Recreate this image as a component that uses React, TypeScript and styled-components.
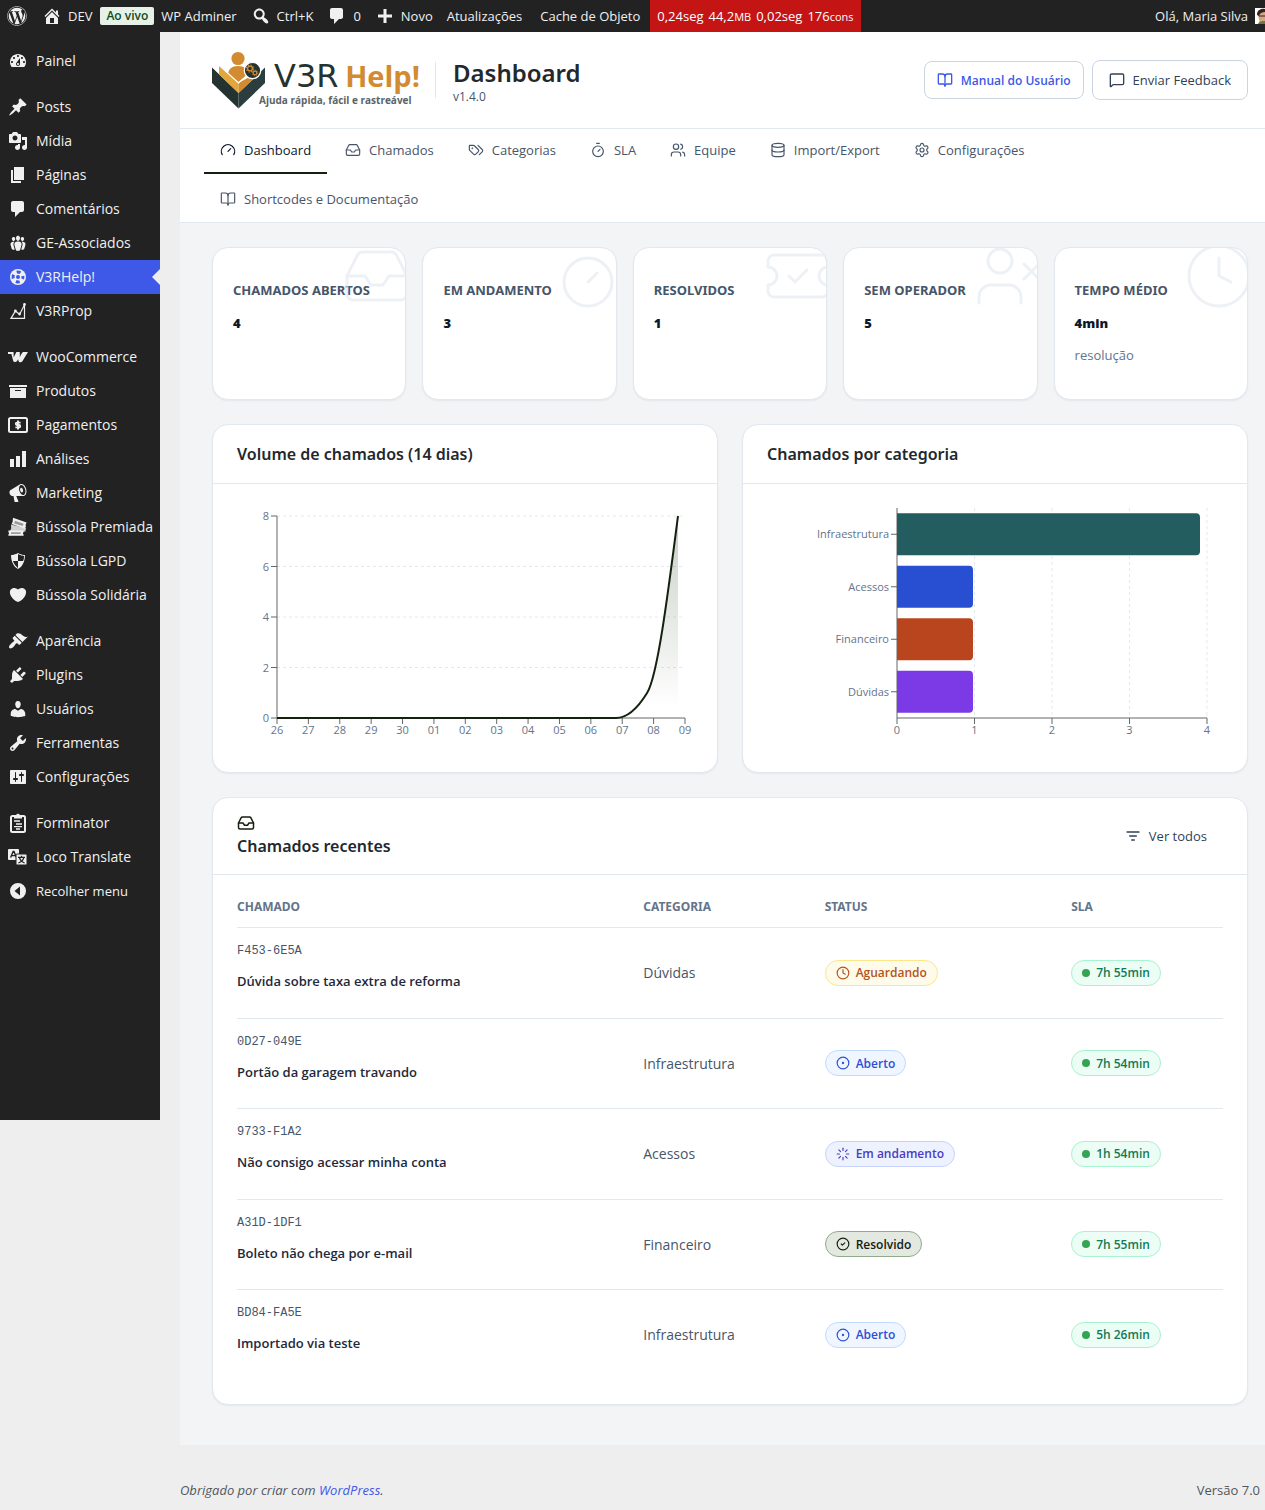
import { ReactNode } from "react";
import {
    BookOpen, CircleCheck, CircleDot, Clock, createLucideIcon, Database, Gauge, Inbox, Loader,
    LucideIcon, MessageSquare, Settings, TicketCheck, Timer, UserX, Users
} from "lucide-react";
import { FaWordpress } from "react-icons/fa";
import styled, { createGlobalStyle } from "styled-components";

const font = {
    body: `"Open Sans", "Noto Sans", sans-serif`,
    heading: `"Noto Sans", "Open Sans", sans-serif`,
    mono: `"Liberation Mono", monospace`,
};

const color = {
    bar: "#222222",
    barText: "#f0f0f1",
    accent: "#3e58e8",
    page: "#eeeeee",
    panel: "#f3f4f6",
    border: "#e2e8f0",
    title: "#23282d",
    text: "#475569",
    muted: "#64748b",
    primary: "#14210f",
};

const GlobalStyle = createGlobalStyle`
    * {
        box-sizing: border-box;
    }

    body {
        margin: 0;
        background-color: ${color.page};
        font-family: ${font.body};
        font-size: 13px;
        color: ${color.text};
    }

    a {
        color: inherit;
        text-decoration: none;
    }

    button {
        font-family: inherit;
        cursor: pointer;
    }

    h1, h2, h3, p, ul {
        margin: 0;
        padding: 0;
    }
`;

/* admin bar */

const AdminBar = styled.header`
    display: flex;
    align-items: center;
    height: 32px;
    padding-left: 7px;
    background-color: ${color.bar};
    color: ${color.barText};
    white-space: nowrap;
    overflow: hidden;
`;

const BarLink = styled.a<{ $space?: number }>`
    display: flex;
    align-items: center;
    gap: 6px;
    margin-left: ${(p) => p.$space ?? 14}px;
    line-height: 32px;

    svg {
        flex-shrink: 0;
    }
`;

const LiveBadge = styled.span`
    margin: 0 0 0 8px;
    padding: 0 6px;
    border-radius: 2px;
    background-color: #e6f2e8;
    color: #0f4a1c;
    font-size: 12px;
    font-weight: 600;
    line-height: 18px;
`;

const Monitor = styled.a`
    display: flex;
    gap: 5px;
    margin-left: 10px;
    padding: 0 7px;
    background-color: #c41414;
    color: #ffffff;
    line-height: 32px;

    small {
        font-size: 11px;
    }
`;

const BarUser = styled.a`
    display: flex;
    align-items: center;
    gap: 7px;
    margin-left: auto;
`;

/* side menu */

const Shell = styled.div`
    display: flex;
    align-items: flex-start;
`;

const SideMenu = styled.nav`
    flex: 0 0 160px;
    padding: 12px 0 212px;
    background-color: ${color.bar};
`;

const MenuGroup = styled.ul`
    list-style: none;
    margin-bottom: 12px;

    &:last-child {
        margin-bottom: 0;
    }
`;

const MenuLink = styled.a<{ $active?: boolean }>`
    position: relative;
    display: flex;
    align-items: center;
    gap: 8px;
    height: 34px;
    padding: 0 0 1px 8px;
    background-color: ${(p) => (p.$active ? color.accent : "transparent")};
    color: ${color.barText};
    font-size: 14px;
    white-space: nowrap;

    &::after {
        content: "";
        display: ${(p) => (p.$active ? "block" : "none")};
        position: absolute;
        top: 9px;
        right: 0;
        border: 8px solid transparent;
        border-left-width: 0;
        border-right-color: ${color.page};
    }
`;

const CollapseButton = styled.button`
    display: flex;
    align-items: center;
    gap: 8px;
    height: 34px;
    padding: 0 0 0 8px;
    border: 0;
    background: none;
    color: ${color.barText};
    font-size: 13px;
`;

/* main column */

const Main = styled.div`
    flex: 1;
    min-width: 0;
    margin-left: 20px;
`;

const Panel = styled.main`
    padding-bottom: 40px;
    background-color: ${color.panel};
`;

const PageHeader = styled.div`
    display: flex;
    align-items: center;
    height: 97px;
    padding: 0 17px 0 32px;
    border-bottom: 1px solid ${color.border};
    background-color: #ffffff;
`;

const Divider = styled.span`
    width: 1px;
    height: 36px;
    margin: 0 17px 0 13px;
    background-color: ${color.border};
`;

const HeaderTitle = styled.div`
    h1 {
        color: ${color.title};
        font-family: ${font.heading};
        font-size: 24px;
        font-weight: 600;
        line-height: 33px;
    }

    p {
        font-size: 12px;
        line-height: 16px;
    }
`;

const HeaderActions = styled.div`
    display: flex;
    align-items: center;
    gap: 8px;
    margin-left: auto;
`;

const HeaderButton = styled.button<{ $strong?: boolean }>`
    display: flex;
    align-items: center;
    gap: 8px;
    height: ${(p) => (p.$strong ? 38 : 40)}px;
    padding: 0 ${(p) => (p.$strong ? 12 : 16)}px;
    border: 1px solid #cbd5e1;
    border-radius: 8px;
    background-color: #ffffff;
    color: ${(p) => (p.$strong ? color.accent : "#334155")};
    font-size: ${(p) => (p.$strong ? 12 : 13)}px;
    font-weight: ${(p) => (p.$strong ? 600 : 400)};
`;

const Tabs = styled.nav`
    padding: 0 24px;
    border-bottom: 1px solid ${color.border};
    background-color: #ffffff;
`;

const TabList = styled.div`
    display: flex;
    flex-wrap: wrap;
    gap: 4px 2px;
    margin-bottom: -1px;
`;

const Tab = styled.a<{ $active?: boolean }>`
    display: flex;
    align-items: center;
    gap: 8px;
    height: 45px;
    padding: 0 16px 2px;
    border-bottom: 2px solid ${(p) => (p.$active ? color.primary : "transparent")};
    color: ${(p) => (p.$active ? "#0f172a" : color.text)};
`;

const Content = styled.div`
    display: flex;
    flex-direction: column;
    gap: 24px;
    padding: 24px 17px 0 32px;
`;

const Card = styled.section`
    border: 1px solid ${color.border};
    border-radius: 16px;
    background-color: #ffffff;
    box-shadow: 0 1px 2px rgba(15, 23, 42, 0.06);
`;

const StatGrid = styled.div`
    display: grid;
    grid-template-columns: repeat(5, 1fr);
    gap: 16px;
`;

const StatCard = styled(Card)`
    position: relative;
    min-height: 153px;
    padding: 32px 20px 20px;
    overflow: hidden;

    > svg {
        position: absolute;
        top: -8px;
        right: -8px;
        color: ${color.border};
        opacity: 0.6;
    }

    h3 {
        font-family: ${font.heading};
        font-size: 13px;
        font-weight: 700;
        line-height: 20px;
        white-space: nowrap;
    }

    strong {
        display: block;
        margin-top: 13px;
        color: #0f172a;
        font-family: ${font.heading};
        font-size: 13px;
        font-weight: 900;
        line-height: 20px;
    }

    p {
        margin-top: 12px;
        color: ${color.muted};
        line-height: 20px;
    }
`;

const ChartGrid = styled.div`
    display: grid;
    grid-template-columns: repeat(2, 1fr);
    gap: 24px;
`;

const CardHeader = styled.div`
    display: flex;
    align-items: center;
    justify-content: space-between;
    min-height: 59px;
    padding: 16px 24px;
    border-bottom: 1px solid ${color.border};
`;

const CardTitle = styled.h2`
    display: flex;
    flex-direction: column;
    gap: 2px;
    color: ${color.title};
    font-family: ${font.heading};
    font-size: 16px;
    font-weight: 600;
    line-height: 24px;

    svg {
        color: ${color.primary};
    }
`;

const ChartBody = styled.div`
    padding: 24px;

    svg {
        display: block;
        width: 100%;
        height: 240px;
    }

    text {
        fill: ${color.muted};
        font-size: 11px;
    }
`;

const GhostButton = styled.button`
    display: flex;
    align-items: center;
    gap: 8px;
    height: 40px;
    padding: 0 16px;
    border: 0;
    background: none;
    color: #334155;
    font-size: 13px;
`;

const TableWrap = styled.div`
    padding: 12px 24px 24px;
`;

const Table = styled.table`
    width: 100%;
    border-collapse: collapse;
    table-layout: fixed;

    th {
        height: 40px;
        padding: 0;
        border-bottom: 1px solid ${color.border};
        color: ${color.muted};
        font-family: ${font.heading};
        font-size: 12px;
        font-weight: 700;
        text-align: left;
    }

    th:nth-child(1) {
        width: 41.2%;
    }

    th:nth-child(2) {
        width: 18.4%;
    }

    th:nth-child(3) {
        width: 25%;
    }

    td {
        height: 90px;
        padding: 0;
        border-bottom: 1px solid ${color.border};
        font-size: 14px;
    }

    tr:nth-child(odd) td {
        height: 91px;
    }

    tr:last-child td {
        border-bottom: 0;
    }
`;

const TicketCode = styled.div`
    font-family: ${font.mono};
    font-size: 12px;
    line-height: 18px;
`;

const TicketTitle = styled.a`
    display: block;
    margin: 11px 0 12px;
    color: #1e293b;
    font-size: 13px;
    font-weight: 600;
    line-height: 20px;
`;

const Pill = styled.span<{ $bg: string; $line: string; $ink: string }>`
    display: inline-flex;
    align-items: center;
    gap: 6px;
    height: 26px;
    padding: 0 10px;
    border: 1px solid ${(p) => p.$line};
    border-radius: 13px;
    background-color: ${(p) => p.$bg};
    color: ${(p) => p.$ink};
    font-size: 12px;
    font-weight: 600;
    white-space: nowrap;
`;

const Dot = styled.i`
    width: 8px;
    height: 8px;
    border-radius: 50%;
    background-color: #34a353;
`;

const Footer = styled.footer`
    display: flex;
    justify-content: space-between;
    padding: 35px 5px 10px 0;
    color: #50575e;
    line-height: 20px;

    a {
        color: ${color.accent};
    }
`;

const TagPair = createLucideIcon("TagPair", [
    ["path", { d: "m15 5 6.3 6.3a2.4 2.4 0 0 1 0 3.4L17 19", key: "back" }],
    ["path", {
        d: "M9.586 5.586A2 2 0 0 0 8.172 5H3a1 1 0 0 0-1 1v5.172a2 2 0 0 0 .586 1.414L8.29 18.29a2.426 2.426 0 0 0 3.42 0l3.58-3.58a2.426 2.426 0 0 0 0-3.42z",
        key: "front",
    }],
    ["circle", { cx: "6.5", cy: "9.5", r: ".5", fill: "currentColor", key: "hole" }],
]);

const FilterLines = createLucideIcon("FilterLines", [
    ["path", { d: "M3 6h18", key: "top" }],
    ["path", { d: "M7 12h10", key: "middle" }],
    ["path", { d: "M10 18h4", key: "bottom" }],
]);

/* icons of the side menu and of the admin bar, on a 20px grid */

const paths = {
    home: "M16 8.5l1.53 1.53-1.06 1.06L10 4.6l-6.47 6.49-1.06-1.06L10 2.5l4 4v-2h2v4zm-6-2.46l6 5.99V18H4v-5.97zM12 17v-5H8v5h4z",
    search: "M12.14 4.18c1.87 1.87 2.11 4.75.72 6.89.12.1.22.21.36.31.2.16.47.36.81.59.34.24.56.39.66.47.42.31.73.57.94.78.32.32.6.65.84 1 .25.35.44.69.59 1.04.14.35.21.68.18 1-.02.32-.14.59-.36.81s-.49.34-.81.36c-.31.02-.65-.04-.99-.19-.35-.14-.7-.34-1.04-.59-.35-.24-.68-.52-1-.84-.21-.21-.47-.52-.77-.93-.1-.13-.25-.35-.47-.66-.22-.32-.4-.57-.56-.78-.16-.2-.29-.35-.44-.5-2.07 1.09-4.69.76-6.44-.98-2.14-2.15-2.14-5.64 0-7.78 2.15-2.15 5.63-2.15 7.78 0zm-1.41 6.36c1.36-1.37 1.36-3.58 0-4.95-1.37-1.37-3.59-1.37-4.95 0-1.37 1.37-1.37 3.58 0 4.95 1.36 1.37 3.58 1.37 4.95 0z",
    plus: "M17 8.5v3h-5.5V17h-3v-5.5H3v-3h5.5V3h3v5.5z",
    comments: "M5 2h9c1.1 0 2 .9 2 2v7c0 1.1-.9 2-2 2h-2l-5 5v-5H5c-1.1 0-2-.9-2-2V4c0-1.1.9-2 2-2z",
    dashboard: "M3.76 16h12.48c1.1-1.37 1.76-3.11 1.76-5 0-4.42-3.58-8-8-8s-8 3.58-8 8c0 1.89.66 3.63 1.76 5zM10 4c.55 0 1 .45 1 1s-.45 1-1 1-1-.45-1-1 .45-1 1-1zM6 6c.55 0 1 .45 1 1s-.45 1-1 1-1-.45-1-1 .45-1 1-1zm8 0c.55 0 1 .45 1 1s-.45 1-1 1-1-.45-1-1 .45-1 1-1zm-5.37 5.55L12 7v6c0 1.1-.9 2-2 2s-2-.9-2-2c0-.57.24-1.08.63-1.45zM4 10c.55 0 1 .45 1 1s-.45 1-1 1-1-.45-1-1 .45-1 1-1zm12 0c.55 0 1 .45 1 1s-.45 1-1 1-1-.45-1-1 .45-1 1-1zm-5 3c0-.55-.45-1-1-1s-1 .45-1 1 .45 1 1 1 1-.45 1-1z",
    post: "M10.44 3.02l1.82-1.82 6.36 6.35-1.83 1.82c-1.05-.68-2.48-.57-3.41.36l-.75.75c-.92.93-1.04 2.35-.35 3.41l-1.83 1.82-2.41-2.41-2.8 2.79c-.42.42-3.38 2.71-3.8 2.29s1.86-3.39 2.28-3.81l2.79-2.79L4.1 9.36l1.83-1.82c1.05.69 2.48.57 3.4-.36l.75-.75c.93-.92 1.05-2.35.36-3.41z",
    media: "M13 11V4c0-.55-.45-1-1-1h-1.67L9 1H5L3.67 3H2c-.55 0-1 .45-1 1v7c0 .55.45 1 1 1h10c.55 0 1-.45 1-1zM7 4.5c1.38 0 2.5 1.12 2.5 2.5S8.38 9.5 7 9.5 4.5 8.38 4.5 7 5.62 4.5 7 4.5zM14 6h5v10.5c0 1.38-1.12 2.5-2.5 2.5S14 17.88 14 16.5s1.12-2.5 2.5-2.5c.17 0 .34.02.5.05V9h-3V6zm-4 8.05V13h2v3.5c0 1.38-1.12 2.5-2.5 2.5S7 17.88 7 16.5 8.12 14 9.5 14c.17 0 .34.02.5.05z",
    page: "M6 15V2h10v13H6zm-1 1h8v2H3V5h2v11z",
    groups: "M8.03 4.46c-.29 1.28.55 3.46 1.97 3.46 1.41 0 2.25-2.18 1.96-3.46-.22-.98-1.08-1.63-1.96-1.63-.89 0-1.74.65-1.97 1.63zm-4.13.9c-.25 1.08.47 2.93 1.67 2.93s1.92-1.85 1.67-2.93c-.19-.83-.92-1.39-1.67-1.39s-1.48.56-1.67 1.39zm8.86 0c-.25 1.08.47 2.93 1.66 2.93 1.2 0 1.92-1.85 1.67-2.93-.19-.83-.92-1.39-1.67-1.39-.74 0-1.47.56-1.66 1.39zm-.59 11.43l1.25-4.3C14.2 10 12.71 8.47 10 8.47c-2.72 0-4.21 1.53-3.44 4.02l1.26 4.3C8.05 17.51 9 18 10 18c.98 0 1.94-.49 2.17-1.21zm-6.1-7.63c-.49.67-.96 1.83-.42 3.59l1.12 3.79c-.34.2-.77.31-1.2.31-.85 0-1.65-.41-1.85-1.03l-1.07-3.65c-.65-2.11.61-3.4 2.92-3.4.27 0 .54.02.79.06-.1.1-.2.22-.29.33zm8.35-.39c2.31 0 3.58 1.29 2.92 3.4l-1.07 3.65c-.2.62-1 1.03-1.85 1.03-.43 0-.86-.11-1.2-.31l1.11-3.77c.55-1.78.08-2.94-.42-3.61-.08-.11-.18-.23-.28-.33.25-.04.51-.06.79-.06z",
    archive: "M19 4v2H1V4h18zM2 7h16v10H2V7zm11 3V9H7v1h6z",
    bars: "M18 18V2h-4v16h4zm-6 0V7H8v11h4zm-6 0v-8H2v8h4z",
    megaphone: "M18.15 5.94c.46 1.62.38 3.22-.02 4.48-.42 1.28-1.26 2.18-2.3 2.48-.16.06-.26.06-.4.06-.06.02-.12.02-.18.02-.06.02-.14.02-.22.02h-6.8l2.22 5.5c.02.14-.06.26-.14.34-.08.1-.24.16-.34.16H6.95c-.1 0-.26-.06-.34-.16-.08-.08-.16-.2-.14-.34l-1-5.5H4.25l-.02-.02c-.5.06-1.08-.18-1.54-.62s-.88-1.08-1.06-1.88c-.24-.8-.2-1.56-.02-2.2.18-.62.58-1.08 1.06-1.3l.02-.02 9-5.4c.1-.06.18-.1.24-.16.06-.04.14-.08.24-.12.16-.08.28-.12.5-.18 1.04-.3 2.24.1 3.22.98s1.84 2.24 2.26 3.86zm-2.58 5.98h-.02c.4-.1.74-.34 1.04-.7.58-.7.86-1.76.86-3.04 0-.64-.1-1.3-.28-1.98-.34-1.36-1.02-2.5-1.78-3.24s-1.68-1.1-2.46-.88c-.82.22-1.4.96-1.7 2-.32 1.04-.28 2.36.06 3.72.38 1.36 1 2.5 1.8 3.24.78.74 1.62 1.1 2.48.88zm-2.54-7.08c.22-.04.42-.02.62.04.38.16.76.48 1.02 1s.42 1.2.42 1.78c0 .3-.04.56-.12.8-.18.48-.44.84-.86.94-.34.1-.8-.06-1.14-.4s-.64-.86-.78-1.5c-.18-.62-.12-1.24.02-1.72s.48-.84.82-.94z",
    shield: "M10 2s3 2 7 2c0 11-7 14-7 14S3 15 3 4c4 0 7-2 7-2zm0 8h5s1-1 1-5c0 0-5-1-6-2v7H5c1 4 5 7 5 7v-7z",
    heart: "M10 17.12c3.33-1.4 5.74-3.79 7.04-6.21 1.28-2.41 1.46-4.81.32-6.25-1.03-1.29-2.37-1.78-3.73-1.74s-2.68.63-3.63 1.46c-.95-.83-2.27-1.42-3.63-1.46s-2.7.45-3.73 1.74c-1.14 1.44-.96 3.84.34 6.25 1.28 2.42 3.69 4.81 7.02 6.21z",
    appearance: "M14.48 11.06L7.41 3.99l1.5-1.5c.5-.56 2.3-.47 3.51.32 1.21.8 1.43 1.28 2.91 2.1 1.18.64 2.45 1.26 4.45.85zm-.71.71L6.7 4.7 4.93 6.47c-.39.39-.39 1.02 0 1.41l1.06 1.06c.39.39.39 1.03 0 1.42-.6.6-1.43 1.11-2.21 1.69-.35.26-.7.53-1.01.84C1.43 14.23.4 16.08 1.4 17.07c.99 1 2.84-.03 4.18-1.36.31-.31.58-.66.85-1.02.57-.78 1.08-1.61 1.69-2.21.39-.39 1.02-.39 1.41 0l1.06 1.06c.39.39 1.02.39 1.41 0z",
    plugins: "M13.11 4.36L9.87 7.6 8 5.73l3.24-3.24c.35-.34 1.05-.2 1.56.32.52.51.66 1.21.31 1.55zm-8 1.77l.91-1.12 9.01 9.01-1.19.84c-.71.71-2.63 1.16-3.82 1.16H6.14L4.9 17.26c-.59.59-1.54.59-2.12 0-.59-.58-.59-1.53 0-2.12l1.24-1.24v-3.88c0-1.13.4-3.19 1.09-3.89zm7.26 3.97l3.24-3.24c.34-.35 1.04-.21 1.55.31.52.51.66 1.21.31 1.55l-3.24 3.25z",
    users: "M10 9.25c-2.27 0-2.73-3.44-2.73-3.44C7 4.02 7.82 2 9.97 2c2.16 0 2.98 2.02 2.71 3.81 0 0-.41 3.44-2.68 3.44zm0 2.57L12.72 10c2.39 0 4.52 2.33 4.52 4.53v2.49s-3.65 1.13-7.24 1.13c-3.65 0-7.24-1.13-7.24-1.13v-2.49c0-2.25 1.94-4.48 4.47-4.48z",
    tools: "M16.68 9.77c-1.34 1.34-3.3 1.67-4.95.99l-5.41 6.52c-.99.99-2.59.99-3.58 0s-.99-2.59 0-3.57l6.52-5.42c-.68-1.65-.35-3.61.99-4.95 1.28-1.28 3.12-1.62 4.72-1.06l-2.89 2.89 2.82 2.82 2.86-2.87c.53 1.58.18 3.39-1.08 4.65zM3.81 16.21c.4.39 1.04.39 1.43 0 .4-.4.4-1.04 0-1.43-.39-.4-1.03-.4-1.43 0-.39.39-.39 1.03 0 1.43z",
    settings: "M18 16V4c0-.55-.45-1-1-1H3c-.55 0-1 .45-1 1v12c0 .55.45 1 1 1h14c.55 0 1-.45 1-1zM8 11h1c.55 0 1 .45 1 1s-.45 1-1 1H8v1.5c0 .28-.22.5-.5.5s-.5-.22-.5-.5V13H6c-.55 0-1-.45-1-1s.45-1 1-1h1V5.5c0-.28.22-.5.5-.5s.5.22.5.5V11zm5-2h-1c-.55 0-1-.45-1-1s.45-1 1-1h1V5.5c0-.28.22-.5.5-.5s.5.22.5.5V7h1c.55 0 1 .45 1 1s-.45 1-1 1h-1v5.5c0 .28-.22.5-.5.5s-.5-.22-.5-.5V9z",
    collapse: "M10 2a8 8 0 1 0 0 16 8 8 0 0 0 0-16zm2 12.5L6.5 10 12 5.5z",
};

const Glyph = (props: { name?: keyof typeof paths; children?: ReactNode }) => (
    <svg width="20" height="20" viewBox="0 0 20 20" fill="currentColor" fillRule="evenodd" aria-hidden="true">
        {props.name ? <path d={paths[props.name]} /> : props.children}
    </svg>
);

const lifebuoy = (
    <Glyph>
        <circle cx="10" cy="10" r="8" />
        <g fill="none" stroke={color.accent} strokeWidth="3">
            <circle cx="10" cy="10" r="4.9" strokeDasharray="3.85 3.85" strokeDashoffset="1.9" />
        </g>
        <circle cx="10" cy="10" r="2" fill={color.accent} />
    </Glyph>
);

const lineChart = (
    <Glyph>
        <g fill="none" stroke="currentColor" strokeWidth="1.2">
            <path d="M3 17.4L7.4 10l4.2 3.4L16.5 3.8v13.6z" />
        </g>
        <circle cx="7.4" cy="10" r="1.4" />
        <circle cx="11.6" cy="13" r="1.4" />
        <circle cx="16.5" cy="3.4" r="1.4" />
    </Glyph>
);

const woo = (
    <Glyph>
        <path
            d="M0 5h5.6v5.6L8.4 5h3.4v5.4C12.6 8 13.600 6.200 15 5h5l-5.600 9.200c-1.200 1.700-3.400 1.500-3.900-.4l-.4-1.600-1 1.800c-1.100 1.700-3.500 1.400-4-.6L3.400 7H0z"
        />
    </Glyph>
);

const payments = (
    <Glyph>
        <rect x="1" y="3" width="18" height="14" rx="1.5" fill="none" stroke="currentColor" strokeWidth="2" />
        <path
            d="M12.6 7.6H9a1.2 1.2 0 0 0 0 2.4h2a1.2 1.2 0 0 1 0 2.4H7.4M10 5.6v8.8"
            fill="none"
            stroke="currentColor"
            strokeWidth="1.9"
        />
    </Glyph>
);

const tickets = (
    <Glyph>
        <path d="M5 .8l13.6 4.8-1 2.1.3 1.9-1 2.2L3.6 7l1-2z" />
        <path d="M3 7.4l15.2 3.8-.8 2 .2 1.4H1.6l1.6-3z" opacity=".85" />
        <path d="M.4 13.6h15.2v1.5l-.8 1.3.8 1.2v1.2H.4v-1.4l.8-1.2-.8-1.2z" />
        <path d="M7 3.8l8.6 3-.9 2.3-8.6-2.6zM3 15.3h9.6v1.6H3z" fill="#9a9a9a" />
    </Glyph>
);

const clipboard = (
    <Glyph>
        <rect x="3" y="3" width="14" height="16" rx="1.5" fill="none" stroke="currentColor" strokeWidth="2" />
        <path d="M6 2h2.2a1.9 1.9 0 0 1 3.6 0H14v3.4H6z" />
        <path d="M6 8h6M8 11h6M6 13.6h8M8 16h4" stroke="currentColor" strokeWidth="1.4" />
    </Glyph>
);

const translate = (
    <Glyph>
        <rect y="2" width="11" height="11" rx="1" />
        <path d="M2.6 10.6l2.6-6.2h.8l2.4 6.2M3.4 8.6h4" fill="none" stroke={color.bar} strokeWidth="1.4" />
        <rect x="8" y="7" width="11" height="11" rx="1" stroke={color.bar} strokeWidth="1" />
        <path
            d="M10 10.4h7M13.5 8.8v1.6M15.8 10.6c-.6 2.6-2.6 4.4-5.4 5.4M11.4 10.6c.8 2.6 2.6 4.4 5.2 5.4"
            fill="none"
            stroke={color.bar}
            strokeWidth="1.2"
        />
    </Glyph>
);

const menuGroups: { label: string; icon: ReactNode; active?: boolean }[][] = [
    [{ label: "Painel", icon: <Glyph name="dashboard" /> }],
    [
        { label: "Posts", icon: <Glyph name="post" /> },
        { label: "Mídia", icon: <Glyph name="media" /> },
        { label: "Páginas", icon: <Glyph name="page" /> },
        { label: "Comentários", icon: <Glyph name="comments" /> },
        { label: "GE-Associados", icon: <Glyph name="groups" /> },
        { label: "V3RHelp!", icon: lifebuoy, active: true },
        { label: "V3RProp", icon: lineChart },
    ],
    [
        { label: "WooCommerce", icon: woo },
        { label: "Produtos", icon: <Glyph name="archive" /> },
        { label: "Pagamentos", icon: payments },
        { label: "Análises", icon: <Glyph name="bars" /> },
        { label: "Marketing", icon: <Glyph name="megaphone" /> },
        { label: "Bússola Premiada", icon: tickets },
        { label: "Bússola LGPD", icon: <Glyph name="shield" /> },
        { label: "Bússola Solidária", icon: <Glyph name="heart" /> },
    ],
    [
        { label: "Aparência", icon: <Glyph name="appearance" /> },
        { label: "Plugins", icon: <Glyph name="plugins" /> },
        { label: "Usuários", icon: <Glyph name="users" /> },
        { label: "Ferramentas", icon: <Glyph name="tools" /> },
        { label: "Configurações", icon: <Glyph name="settings" /> },
    ],
    [
        { label: "Forminator", icon: clipboard },
        { label: "Loco Translate", icon: translate },
    ],
];

const tabs: { label: string; icon: LucideIcon }[] = [
    { label: "Dashboard", icon: Gauge },
    { label: "Chamados", icon: Inbox },
    { label: "Categorias", icon: TagPair },
    { label: "SLA", icon: Timer },
    { label: "Equipe", icon: Users },
    { label: "Import/Export", icon: Database },
    { label: "Configurações", icon: Settings },
    { label: "Shortcodes e Documentação", icon: BookOpen },
];

const stats: { label: string; value: string; note?: string; icon: LucideIcon }[] = [
    { label: "CHAMADOS ABERTOS", value: "4", icon: Inbox },
    { label: "EM ANDAMENTO", value: "3", icon: Timer },
    { label: "RESOLVIDOS", value: "1", icon: TicketCheck },
    { label: "SEM OPERADOR", value: "5", icon: UserX },
    { label: "TEMPO MÉDIO", value: "4min", note: "resolução", icon: Clock },
];

const statuses = {
    Aguardando: { icon: Clock, bg: "#fffbeb", line: "#fde68a", ink: "#b45320" },
    Aberto: { icon: CircleDot, bg: "#eff6ff", line: "#bfdbfe", ink: "#2b4fd6" },
    "Em andamento": { icon: Loader, bg: "#eef2ff", line: "#c7d2fe", ink: "#4a3cc4" },
    Resolvido: { icon: CircleCheck, bg: "#e3e9e1", line: "#8fab8c", ink: "#14210f" },
};

const ticketRows: { code: string; title: string; category: string; status: keyof typeof statuses; sla: string }[] = [
    { code: "F453-6E5A", title: "Dúvida sobre taxa extra de reforma", category: "Dúvidas", status: "Aguardando", sla: "7h 55min" },
    { code: "0D27-049E", title: "Portão da garagem travando", category: "Infraestrutura", status: "Aberto", sla: "7h 54min" },
    { code: "9733-F1A2", title: "Não consigo acessar minha conta", category: "Acessos", status: "Em andamento", sla: "1h 54min" },
    { code: "A31D-1DF1", title: "Boleto não chega por e-mail", category: "Financeiro", status: "Resolvido", sla: "7h 55min" },
    { code: "BD84-FA5E", title: "Importado via teste", category: "Infraestrutura", status: "Aberto", sla: "5h 26min" },
];

const Logo = () => (
    <svg width="210" height="64" viewBox="0 0 210 64" role="img" aria-label="V3RHelp!">
        <circle cx="26" cy="10.5" r="6.6" fill="#d38b31" />
        <path d="M16 27c0-6 4-9 10-9s10 3 10 9l-9.7 7z" fill="#d38b31" />
        <path d="M0 19.5L26.5 45v15.5L0 35z" fill="#24332f" />
        <path d="M53 19.5L26.5 45v15.5L53 35z" fill="#2b3d3f" />
        <path d="M7 17.5L26.5 35v10L7 26.5z" fill="#e2a63a" />
        <path d="M46 24L26.5 35v10L46 27z" fill="#d38b31" />
        <path d="M7.5 17.5l19 17.5 10-9" fill="none" stroke="#ffffff" strokeWidth="1.2" />
        <circle cx="40.5" cy="22.5" r="8.2" fill="#24332f" stroke="#ffffff" strokeWidth="1.2" />
        <g fill="none" stroke="#d38b31">
            <circle cx="38" cy="20.5" r="2.4" strokeWidth="1.3" />
            <circle cx="38" cy="20.5" r="3.5" strokeWidth="1.2" strokeDasharray="1.375 1.375" />
            <circle cx="43" cy="25" r="1.8" strokeWidth="1.2" />
            <circle cx="43" cy="25" r="2.8" strokeWidth="1" strokeDasharray="1.1 1.1" />
        </g>
        <text x="62" y="39" fontFamily="DejaVu Sans, sans-serif" fontSize="32" fill="#24332f">V3R</text>
        <text x="208" y="39" textAnchor="end" fontSize="29" fontWeight="700" fill="#d38b31">Help!</text>
        <text x="47" y="56" fontSize="10" fontWeight="700" fill="#5c6466">Ajuda rápida, fácil e rastreável</text>
    </svg>
);

const Avatar = () => (
    <svg width="10" height="18" viewBox="0 0 10 18" aria-hidden="true">
        <rect y="1" width="10" height="16" fill="#ffffff" />
        <path d="M3 8c0-4 3-6 7-6v15H5z" fill="#d8a583" />
        <path d="M2 8c0-5 4-7 8-6v3C7 5 5 6 4 9z" fill="#2c2522" />
        <path d="M4 9h6" stroke="#2c2522" strokeWidth="1" />
        <path d="M3 17c1-3 4-3 7-3v3z" fill="#6b7a3c" />
    </svg>
);

const days = ["26", "27", "28", "29", "30", "01", "02", "03", "04", "05", "06", "07", "08", "09"];

const VolumeChart = () => {
    const line = "M40 210H379C389.6 210 399.9 201.6 410.2 184.75C420.5 167.95 430.7 88 441 8";

    return (
        <svg viewBox="0 0 456 240" role="img" aria-label="Volume de chamados">
            <defs>
                <linearGradient id="volume" x1="0" y1="0" x2="0" y2="1">
                    <stop offset="5%" stopColor="#304a26" stopOpacity="0.25" />
                    <stop offset="95%" stopColor="#304a26" stopOpacity="0" />
                </linearGradient>
            </defs>
            {[0, 2, 4, 6, 8].map((value) => {
                const y = 210 - value * 25.25;
                return (
                    <g key={value}>
                        {value > 0 && <path d={`M40 ${y}H448`} stroke={color.border} strokeDasharray="3 3" />}
                        <path d={`M34 ${y}H40`} stroke="#666666" />
                        <text x="32" y={y + 4} textAnchor="end">{value}</text>
                    </g>
                );
            })}
            <path d="M40 8V210H448" fill="none" stroke="#666666" />
            {days.map((day, i) => {
                const x = 40 + (i * 408) / 13;
                return (
                    <g key={day}>
                        <path d={`M${x} 210V216`} stroke="#666666" />
                        <text x={x} y="226" textAnchor="middle">{day}</text>
                    </g>
                );
            })}
            <path d={`${line}V210Z`} fill="url(#volume)" />
            <path d={line} fill="none" stroke={color.primary} strokeWidth="2" />
        </svg>
    );
};

const categories = [
    { label: "Infraestrutura", width: 303, fill: "#235d60" },
    { label: "Acessos", width: 76, fill: "#284fd2" },
    { label: "Financeiro", width: 76, fill: "#b9451e" },
    { label: "Dúvidas", width: 76, fill: "#7b3ae5" },
];

const CategoryChart = () => (
    <svg viewBox="0 0 456 240" role="img" aria-label="Chamados por categoria">
        {[0, 1, 2, 3, 4].map((value) => {
            const x = 130 + value * 77.5;
            return (
                <g key={value}>
                    {value > 0 && <path d={`M${x} 0V210`} stroke={color.border} strokeDasharray="3 3" />}
                    <path d={`M${x} 210V216`} stroke="#666666" />
                    <text x={x} y="226" textAnchor="middle">{value}</text>
                </g>
            );
        })}
        <path d="M130 0V210H440" fill="none" stroke="#666666" />
        {categories.map((item, i) => {
            const y = 5.25 + i * 52.5;
            return (
                <g key={item.label}>
                    <path d={`M124 ${y + 21}H130`} stroke="#666666" />
                    <path d={`M130 ${y}h${item.width - 4}a4 4 0 0 1 4 4v34a4 4 0 0 1-4 4H130z`} fill={item.fill} />
                    <text x="122" y={y + 25} textAnchor="end">{item.label}</text>
                </g>
            );
        })}
    </svg>
);

export default function App() {
    return (
        <>
            <GlobalStyle />
            <AdminBar>
                <BarLink href="#" $space={0} aria-label="WordPress"><FaWordpress size={20} /></BarLink>
                <BarLink href="#" $space={15}><Glyph name="home" />DEV</BarLink>
                <LiveBadge>Ao vivo</LiveBadge>
                <BarLink href="#" $space={7}>WP Adminer</BarLink>
                <BarLink href="#"><Glyph name="search" />Ctrl+K</BarLink>
                <BarLink href="#"><Glyph name="comments" />0</BarLink>
                <BarLink href="#"><Glyph name="plus" />Novo</BarLink>
                <BarLink href="#">Atualizações</BarLink>
                <BarLink href="#" $space={18}>Cache de Objeto</BarLink>
                <Monitor href="#">
                    <span>0,24seg</span>
                    <span>44,2<small>MB</small></span>
                    <span>0,02seg</span>
                    <span>176<small>cons</small></span>
                </Monitor>
                <BarUser href="#">Olá, Maria Silva<Avatar /></BarUser>
            </AdminBar>
            <Shell>
                <SideMenu>
                    {menuGroups.map((group) => (
                        <MenuGroup key={group[0].label}>
                            {group.map((item) => (
                                <li key={item.label}>
                                    <MenuLink href="#" $active={item.active}>
                                        {item.icon}
                                        {item.label}
                                    </MenuLink>
                                </li>
                            ))}
                            {group[0].label === "Forminator" && (
                                <li>
                                    <CollapseButton><Glyph name="collapse" />Recolher menu</CollapseButton>
                                </li>
                            )}
                        </MenuGroup>
                    ))}
                </SideMenu>
                <Main>
                    <Panel>
                        <PageHeader>
                            <Logo />
                            <Divider />
                            <HeaderTitle>
                                <h1>Dashboard</h1>
                                <p>v1.4.0</p>
                            </HeaderTitle>
                            <HeaderActions>
                                <HeaderButton $strong>
                                    <BookOpen size={16} />
                                    Manual do Usuário
                                </HeaderButton>
                                <HeaderButton>
                                    <MessageSquare size={16} />
                                    Enviar Feedback
                                </HeaderButton>
                            </HeaderActions>
                        </PageHeader>
                        <Tabs>
                            <TabList>
                                {tabs.map(({ label, icon: Icon }, i) => (
                                    <Tab key={label} href="#" $active={i === 0}>
                                        <Icon size={16} strokeWidth={1.75} />
                                        {label}
                                    </Tab>
                                ))}
                            </TabList>
                        </Tabs>
                        <Content>
                            <StatGrid>
                                {stats.map(({ label, value, note, icon: Icon }) => (
                                    <StatCard key={label}>
                                        <h3>{label}</h3>
                                        <strong>{value}</strong>
                                        {note && <p>{note}</p>}
                                        <Icon size={72} strokeWidth={1} />
                                    </StatCard>
                                ))}
                            </StatGrid>
                            <ChartGrid>
                                <Card>
                                    <CardHeader>
                                        <CardTitle>Volume de chamados (14 dias)</CardTitle>
                                    </CardHeader>
                                    <ChartBody><VolumeChart /></ChartBody>
                                </Card>
                                <Card>
                                    <CardHeader>
                                        <CardTitle>Chamados por categoria</CardTitle>
                                    </CardHeader>
                                    <ChartBody><CategoryChart /></ChartBody>
                                </Card>
                            </ChartGrid>
                            <Card>
                                <CardHeader>
                                    <CardTitle>
                                        <Inbox size={18} />
                                        Chamados recentes
                                    </CardTitle>
                                    <GhostButton>
                                        <FilterLines size={16} />
                                        Ver todos
                                    </GhostButton>
                                </CardHeader>
                                <TableWrap>
                                    <Table>
                                        <thead>
                                            <tr>
                                                <th>CHAMADO</th>
                                                <th>CATEGORIA</th>
                                                <th>STATUS</th>
                                                <th>SLA</th>
                                            </tr>
                                        </thead>
                                        <tbody>
                                            {ticketRows.map((row) => {
                                                const status = statuses[row.status];
                                                return (
                                                    <tr key={row.code}>
                                                        <td>
                                                            <TicketCode>{row.code}</TicketCode>
                                                            <TicketTitle href="#">{row.title}</TicketTitle>
                                                        </td>
                                                        <td>{row.category}</td>
                                                        <td>
                                                            <Pill $bg={status.bg} $line={status.line} $ink={status.ink}>
                                                                <status.icon size={14} />
                                                                {row.status}
                                                            </Pill>
                                                        </td>
                                                        <td>
                                                            <Pill $bg="#ecfdf5" $line="#a7f3d0" $ink="#117a56">
                                                                <Dot />
                                                                {row.sla}
                                                            </Pill>
                                                        </td>
                                                    </tr>
                                                );
                                            })}
                                        </tbody>
                                    </Table>
                                </TableWrap>
                            </Card>
                        </Content>
                    </Panel>
                    <Footer>
                        <em>Obrigado por criar com <a href="#">WordPress</a>.</em>
                        <span>Versão 7.0</span>
                    </Footer>
                </Main>
            </Shell>
        </>
    );
}
